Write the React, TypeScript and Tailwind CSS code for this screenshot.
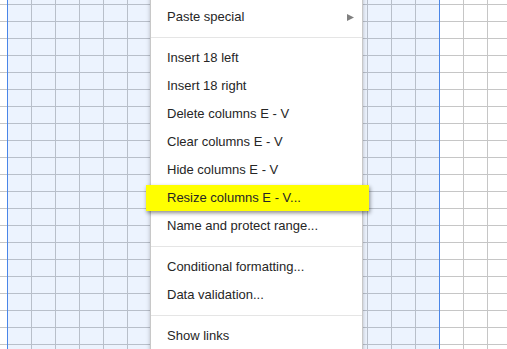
import React from 'react'

type Item = { label: string; arrow?: boolean; highlight?: boolean } | 'sep'

const items: Item[] = [
  { label: 'Paste special', arrow: true },
  'sep',
  { label: 'Insert 18 left' },
  { label: 'Insert 18 right' },
  { label: 'Delete columns E - V' },
  { label: 'Clear columns E - V' },
  { label: 'Hide columns E - V' },
  { label: 'Resize columns E - V...', highlight: true },
  { label: 'Name and protect range...' },
  'sep',
  { label: 'Conditional formatting...' },
  { label: 'Data validation...' },
  'sep',
  { label: 'Show links' },
]

export default function App() {
  return (
    <div
      className="relative w-[507px] h-[349px] overflow-hidden bg-white bg-[linear-gradient(to_right,#c6c6c6_1px,transparent_1px),linear-gradient(to_bottom,#c6c6c6_1px,transparent_1px)] bg-[size:24px_100%,100%_17px] bg-[position:7px_0,0_4px]"
      style={{ fontFamily: '"Liberation Sans", Arial, sans-serif' }}
    >
      {/* selected columns */}
      <div className="absolute top-0 bottom-0 left-[7px] w-[433px] bg-[rgba(66,133,244,0.1)] border-x border-[#4a86e8]" />

      {/* context menu */}
      <div className="absolute left-[150px] top-[-7px] w-[213px] h-[370px] bg-white border-x border-[#c8c8c8] shadow-[0_2px_4px_rgba(0,0,0,0.25)] pt-[10px] text-[13px] text-[#262626]">
        {items.map((item, i) =>
          item === 'sep' ? (
            <div key={i} className="py-[6px]">
              <div className="h-px bg-[#e5e5e5]" />
            </div>
          ) : (
            <div key={i} className="relative h-[28px] flex items-center pl-[16px] pr-[7px]">
              {item.highlight && (
                <div className="absolute -left-[5px] -right-[7px] top-[1px] bottom-[1px] bg-[#ffff00] shadow-[1px_2px_4px_rgba(0,0,0,0.45)]" />
              )}
              <span className="relative flex-1">{item.label}</span>
              {item.arrow && (
                <svg width="7" height="7" viewBox="0 0 7 7" className="relative mr-[1px]">
                  <path d="M0 0 L7 3.5 L0 7 Z" fill="#808080" />
                </svg>
              )}
            </div>
          )
        )}
      </div>
    </div>
  )
}
